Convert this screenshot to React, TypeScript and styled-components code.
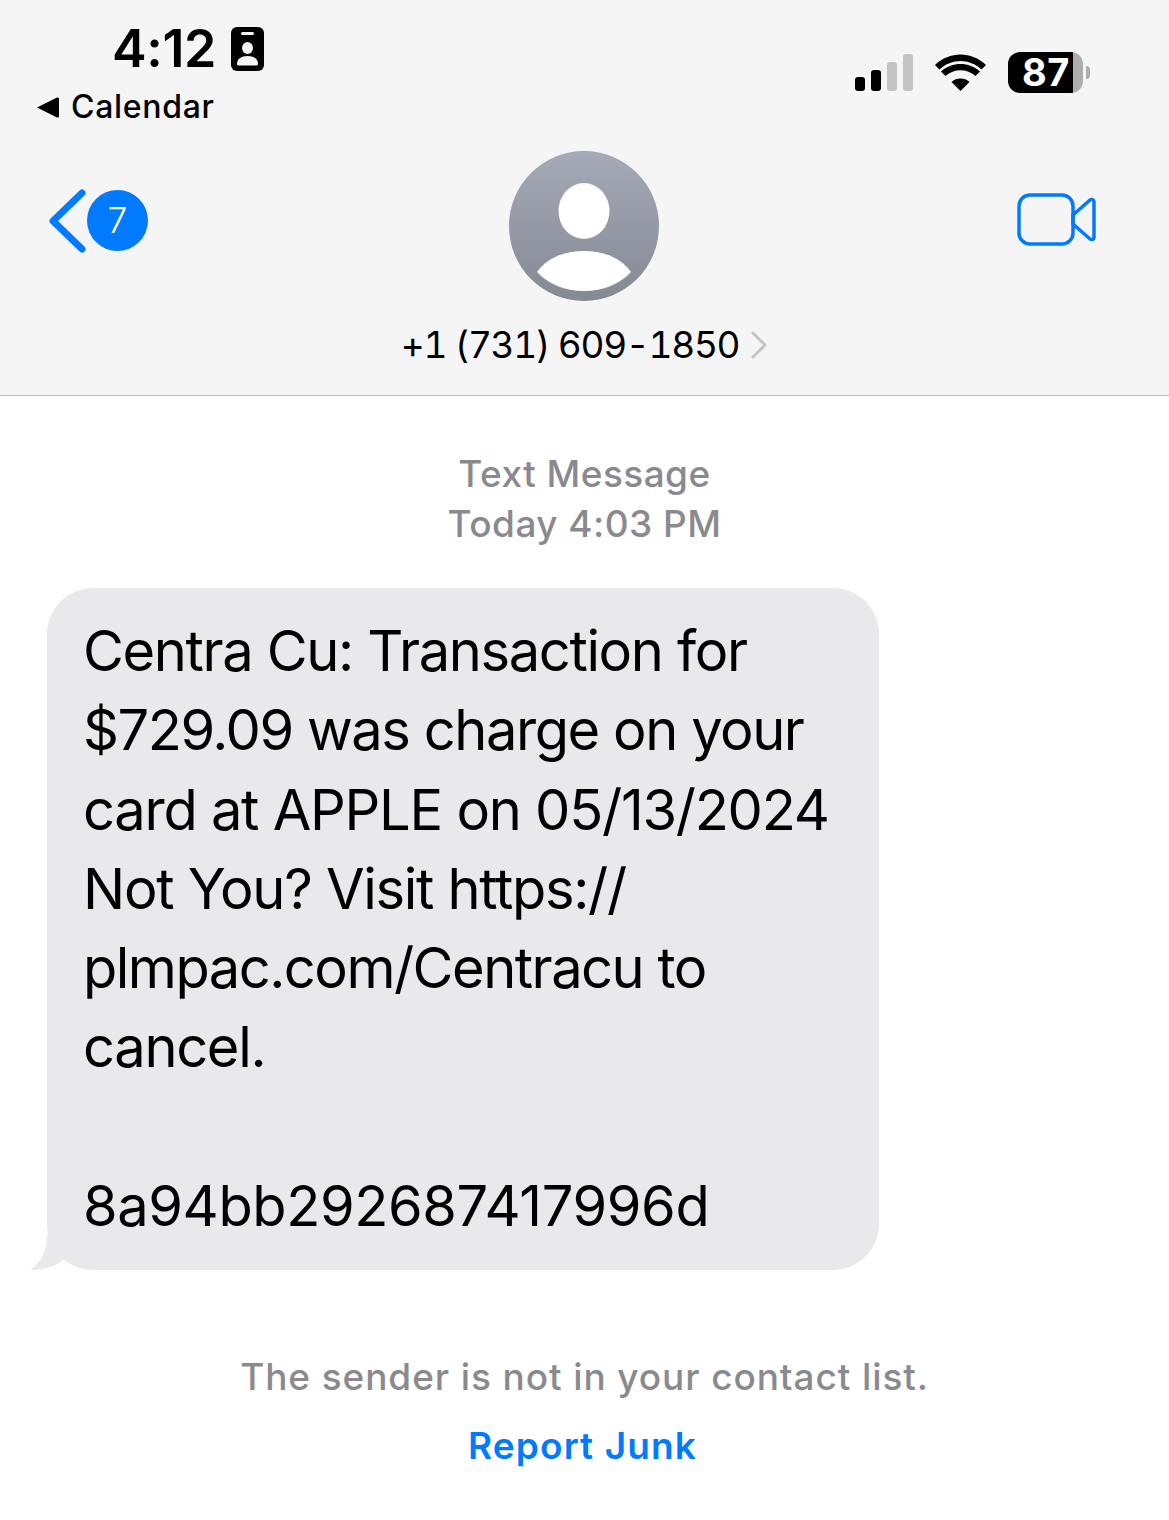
import styled, { createGlobalStyle } from "styled-components";

const GlobalStyle = createGlobalStyle`
  html, body {
    margin: 0;
    padding: 0;
    background: #ffffff;
  }
  * {
    box-sizing: border-box;
  }
`;

const Page = styled.div`
  width: 1169px;
  height: 1520px;
  overflow: hidden;
  background: #ffffff;
  font-family: Inter, "Liberation Sans", sans-serif;
  color: #000000;
`;

const Header = styled.header`
  height: 396px;
  background: #f5f5f5;
  border-bottom: 1px solid #b9b9bb;
`;

const StatusBar = styled.div`
  display: flex;
  justify-content: space-between;
  align-items: flex-start;
  height: 151px;
  padding: 22px 79px 0 37px;
`;

const StatusLeft = styled.div`
  display: flex;
  flex-direction: column;
`;

const ClockRow = styled.div`
  display: flex;
  align-items: center;
  gap: 15px;
  margin-left: 75px;
  height: 54px;
`;

const Clock = styled.span`
  font-size: 52px;
  font-weight: 600;
  line-height: 54px;
  letter-spacing: -0.4px;
`;

const ReturnLink = styled.div`
  display: flex;
  align-items: center;
  gap: 12px;
  height: 40px;
  margin-top: 11px;
  font-size: 32px;
  font-weight: 500;
  line-height: 40px;
  letter-spacing: 0.7px;
`;

const StatusRight = styled.div`
  display: flex;
  align-items: center;
  gap: 22px;
  margin-top: 30px;
`;

const Battery = styled.div`
  display: flex;
  align-items: center;
  gap: 3px;
`;

const BatteryBody = styled.div`
  width: 75px;
  height: 41px;
  border-radius: 12px;
  background: linear-gradient(to right, #000000 0 65px, #adadad 65px);
  color: #ffffff;
  font-size: 38px;
  font-weight: 700;
  line-height: 41px;
  padding-left: 14px;
  letter-spacing: 0.5px;
`;

const BatteryCap = styled.div`
  width: 4px;
  height: 13px;
  border-radius: 0 6px 6px 0;
  background: #adadad;
`;

const NavBar = styled.div`
  display: grid;
  grid-template-columns: 1fr auto 1fr;
  padding: 0 48px;
`;

const BackButton = styled.div`
  display: flex;
  align-items: center;
  height: 61px;
  margin-top: 39px;
  justify-self: start;
`;

const UnreadBadge = styled.span`
  display: flex;
  align-items: center;
  justify-content: center;
  width: 61px;
  height: 61px;
  margin-left: 1px;
  border-radius: 50%;
  background: #007aff;
  color: #ffffff;
  font-size: 35px;
  font-weight: 300;
  line-height: 1;
`;

const Contact = styled.div`
  display: flex;
  flex-direction: column;
  align-items: center;
  margin-right: 1px;
`;

const ContactName = styled.div`
  display: flex;
  align-items: center;
  gap: 12px;
  margin-top: 21px;
  font-size: 37px;
  font-weight: 400;
  line-height: 46px;
  letter-spacing: -1.3px;
  font-variant-numeric: tabular-nums;
`;

const VideoButton = styled.div`
  justify-self: end;
  margin-top: 42px;
  margin-right: 24px;
`;

const Thread = styled.main`
  display: flex;
  flex-direction: column;
  padding: 53px 0 0;
`;

const Timestamp = styled.div`
  color: #8a8a8e;
  font-size: 37px;
  font-weight: 500;
  line-height: 50px;
  text-align: center;
  letter-spacing: 0.45px;
`;

const Bubble = styled.div`
  position: relative;
  width: 832px;
  margin: 39px 0 0 47px;
  padding: 24px 36px;
  border-radius: 46px;
  background: #e9e9eb;
  font-size: 56px;
  font-weight: 400;
  line-height: 79.3px;
`;

const BubbleTail = styled.svg`
  position: absolute;
  left: -16px;
  bottom: 0;
`;

const TextLine = styled.div<{ $spacing: string }>`
  min-height: 79.3px;
  white-space: nowrap;
  letter-spacing: ${(p) => p.$spacing};
`;

const Notice = styled.div`
  margin-top: 84px;
  color: #8a8a8e;
  font-size: 37px;
  font-weight: 500;
  line-height: 46px;
  text-align: center;
  letter-spacing: 0.9px;
`;

const ReportLink = styled.div`
  margin-top: 23px;
  margin-right: 4px;
  color: #007aff;
  font-size: 37px;
  font-weight: 600;
  line-height: 46px;
  text-align: center;
  letter-spacing: 1.1px;
`;

// the digit-heavy hash line runs wider than the prose lines
const messageLines = [
  { text: "Centra Cu: Transaction for", spacing: "-1.35px" },
  { text: "$729.09 was charge on your", spacing: "-1.45px" },
  { text: "card at APPLE on 05/13/2024", spacing: "-1.25px" },
  { text: "Not You? Visit https://", spacing: "-1.3px" },
  { text: "plmpac.com/Centracu to", spacing: "-1.5px" },
  { text: "cancel.", spacing: "-1.3px" },
  { text: "", spacing: "0" },
  { text: "8a94bb292687417996d", spacing: "-0.4px" },
];

function IdCardIcon() {
  return (
    <svg width="33" height="44" viewBox="0 0 33 44">
      <rect width="33" height="44" rx="6" fill="#000" />
      <rect x="10" y="5" width="13" height="3" rx="1.5" fill="#f5f5f5" />
      <ellipse cx="16.5" cy="21" rx="5.5" ry="6" fill="#f5f5f5" />
      <path d="M6 37c0-5 4-8 10.500-8S27 32 27 37c0 1-1 1.500-2 1.500H8C7 38.500 6 38 6 37z" fill="#f5f5f5" />
    </svg>
  );
}

function SignalIcon() {
  const bars = [
    { x: 0, h: 14, fill: "#000" },
    { x: 16, h: 21, fill: "#000" },
    { x: 32, h: 29, fill: "#c4c4c4" },
    { x: 48, h: 37, fill: "#c4c4c4" },
  ];
  return (
    <svg width="58" height="37" viewBox="0 0 58 37">
      {bars.map((bar) => (
        <rect key={bar.x} x={bar.x} y={37 - bar.h} width="10" height={bar.h} rx="3" fill={bar.fill} />
      ))}
    </svg>
  );
}

function WifiIcon() {
  return (
    <svg width="51" height="37" viewBox="0 0 51 37">
      <path d="M25.500 37 16.500 28c5-4.600 13-4.600 18 0z" fill="#000" />
      <path d="M10.500 22 6 17.500c10.800-10 28.200-10 39 0L40.500 22c-8.400-7.600-21.600-7.600-30 0z" fill="#000" />
      <path d="M4.500 15.500 0 11C14.400-3 36.600-3 51 11l-4.500 4.500C34.500 4 16.500 4 4.500 15.500z" fill="#000" />
    </svg>
  );
}

function App() {
  return (
    <Page>
      <GlobalStyle />
      <Header>
        <StatusBar>
          <StatusLeft>
            <ClockRow>
              <Clock>4:12</Clock>
              <IdCardIcon />
            </ClockRow>
            <ReturnLink>
              <svg width="22" height="21" viewBox="0 0 22 21">
                <path d="M0 10.500 20 .5c1-.4 2 .2 2 1.300v17.400c0 1.100-1 1.700-2 1.300z" fill="#000" />
              </svg>
              Calendar
            </ReturnLink>
          </StatusLeft>
          <StatusRight>
            <SignalIcon />
            <WifiIcon />
            <Battery>
              <BatteryBody>87</BatteryBody>
              <BatteryCap />
            </Battery>
          </StatusRight>
        </StatusBar>
        <NavBar>
          <BackButton>
            <svg width="38" height="64" viewBox="0 0 38 64">
              <path
                d="M34 4 5 32l29 28"
                fill="none"
                stroke="#007aff"
                strokeWidth="7"
                strokeLinecap="round"
                strokeLinejoin="round"
              />
            </svg>
            <UnreadBadge>7</UnreadBadge>
          </BackButton>
          <Contact>
            <svg width="150" height="150" viewBox="0 0 150 150">
              <defs>
                <linearGradient id="avatarFill" x1="0" y1="0" x2="0" y2="1">
                  <stop offset="0" stopColor="#a5aab7" />
                  <stop offset="1" stopColor="#858994" />
                </linearGradient>
              </defs>
              <circle cx="75" cy="75" r="75" fill="url(#avatarFill)" />
              <ellipse cx="75" cy="60" rx="25.500" ry="28" fill="#fff" />
              <path d="M28 121c10-14 27-21 47-21s37 7 47 21c-11 12-28 19-47 19s-36-7-47-19z" fill="#fff" />
            </svg>
            <ContactName>
              +1 (731) 609-1850
              <svg width="16" height="28" viewBox="0 0 16 28">
                <path
                  d="M2 2l12 12L2 26"
                  fill="none"
                  stroke="#c4c4c6"
                  strokeWidth="3"
                  strokeLinecap="round"
                  strokeLinejoin="round"
                />
              </svg>
            </ContactName>
          </Contact>
          <VideoButton>
            <svg width="80" height="53" viewBox="0 0 80 53">
              <rect x="2" y="2" width="54" height="49" rx="11" fill="none" stroke="#007aff" strokeWidth="3.500" />
              <path
                d="M56 22 73 7c1.500-1.200 4-.4 4 1.800v35.400c0 2.200-2.500 3-4 1.800L56 31z"
                fill="none"
                stroke="#007aff"
                strokeWidth="3.500"
                strokeLinejoin="round"
              />
            </svg>
          </VideoButton>
        </NavBar>
      </Header>
      <Thread>
        <Timestamp>
          Text Message
          <br />
          Today 4:03 PM
        </Timestamp>
        <Bubble>
          {messageLines.map((line, i) => (
            <TextLine key={i} $spacing={line.spacing}>
              {line.text}
            </TextLine>
          ))}
          <BubbleTail width="64" height="35" viewBox="0 0 64 35">
            <path d="M16 0C16 15 11 27 0 34.500V35C14 35 26 31 35 23C41 30 54 35 64 35V0z" fill="#e9e9eb" />
          </BubbleTail>
        </Bubble>
        <Notice>The sender is not in your contact list.</Notice>
        <ReportLink>Report Junk</ReportLink>
      </Thread>
    </Page>
  );
}

export default App;
